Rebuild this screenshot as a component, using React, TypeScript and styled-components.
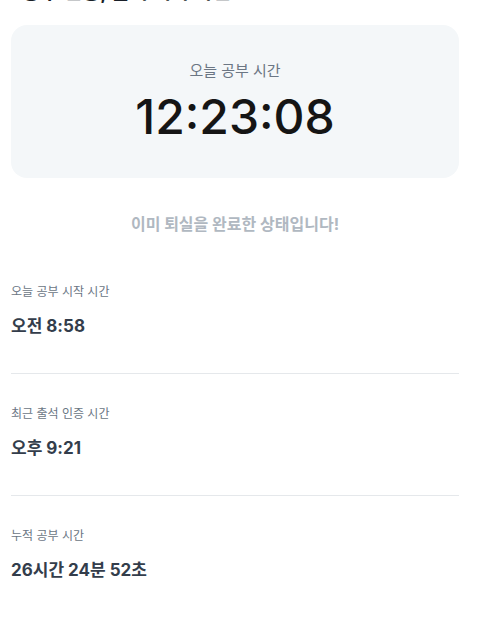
import styled, { createGlobalStyle } from 'styled-components'

const GlobalStyle = createGlobalStyle`
  html, body {
    margin: 0;
    padding: 0;
    background: #ffffff;
    overflow: hidden;
  }
  body {
    font-family: Inter, "Noto Sans CJK KR", sans-serif;
    color: #191f28;
  }
`

const Page = styled.main`
  width: 448px;
  padding: 0 11px;
`

/* 스크롤되어 아랫부분만 보이는 제목 */
const Heading = styled.h1`
  margin: -22px 0 19px;
  font-size: 20px;
  line-height: 28px;
  font-weight: 700;
  color: #191f28;
  padding-left: 11px;
`

const TimerCard = styled.section`
  display: flex;
  flex-direction: column;
  align-items: center;
  background: #f4f7f9;
  border-radius: 16px;
  padding: 35px 0 32px;
`

const TimerLabel = styled.div`
  font-size: 15px;
  line-height: 22px;
  color: #6b7684;
`

const TimerValue = styled.div`
  margin-top: 6px;
  font-size: 48px;
  line-height: 58px;
  font-weight: 500;
  color: #151515;
`

const Notice = styled.p`
  margin: 34px 0 0;
  text-align: center;
  font-size: 16px;
  line-height: 24px;
  font-weight: 700;
  color: #b0b8c1;
`

const InfoList = styled.div`
  margin-top: 16px;
  display: flex;
  flex-direction: column;
`

const InfoRow = styled.div<{ $last?: boolean }>`
  display: flex;
  flex-direction: column;
  gap: 13px;
  padding: 31px 0 35px;
  border-bottom: ${(p) => (p.$last ? 'none' : '1px solid #e5e8eb')};
`

const InfoLabel = styled.span`
  font-size: 12px;
  line-height: 18px;
  color: #6b7684;
`

const InfoValue = styled.span`
  font-size: 17px;
  line-height: 24px;
  font-weight: 700;
  color: #333d4b;
`

const rows = [
  { label: '오늘 공부 시작 시간', value: '오전 8:58' },
  { label: '최근 출석 인증 시간', value: '오후 9:21' },
  { label: '누적 공부 시간', value: '26시간 24분 52초' },
]

export default function App() {
  return (
    <>
      <GlobalStyle />
      <Page>
        <Heading>공부 현황, 출석 기록 확인</Heading>
        <TimerCard>
          <TimerLabel>오늘 공부 시간</TimerLabel>
          <TimerValue>12:23:08</TimerValue>
        </TimerCard>
        <Notice>이미 퇴실을 완료한 상태입니다!</Notice>
        <InfoList>
          {rows.map((r, i) => (
            <InfoRow key={r.label} $last={i === rows.length - 1}>
              <InfoLabel>{r.label}</InfoLabel>
              <InfoValue>{r.value}</InfoValue>
            </InfoRow>
          ))}
        </InfoList>
      </Page>
    </>
  )
}
